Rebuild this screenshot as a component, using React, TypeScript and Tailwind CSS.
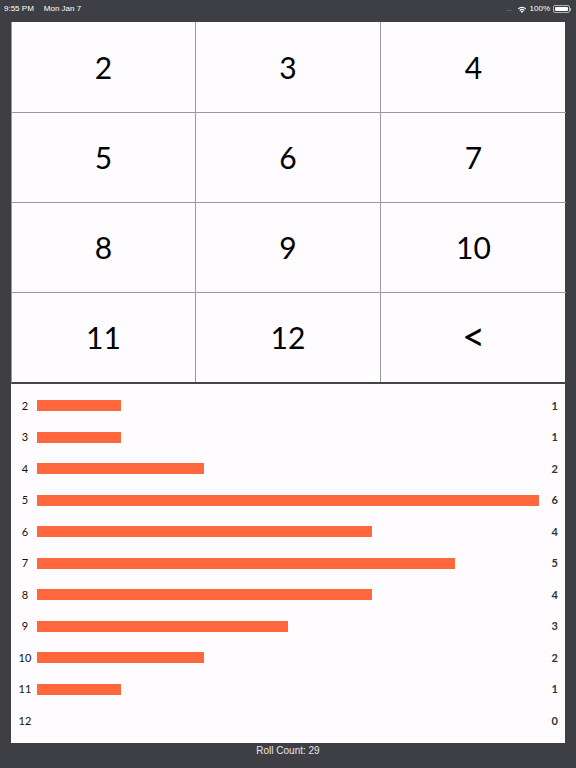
const keys = ["2", "3", "4", "5", "6", "7", "8", "9", "10", "11", "12", "<"]

const rolls: [string, number][] = [
  ["2", 1],
  ["3", 1],
  ["4", 2],
  ["5", 6],
  ["6", 4],
  ["7", 5],
  ["8", 4],
  ["9", 3],
  ["10", 2],
  ["11", 1],
  ["12", 0],
]

const max = Math.max(...rolls.map(([, n]) => n))
const total = rolls.reduce((s, [, n]) => s + n, 0)

function StatusBar() {
  return (
    <div className="h-[22px] flex items-start justify-between px-[4px] pt-[3px] text-[8px] text-white font-['Liberation_Sans',sans-serif]">
      <div className="flex gap-[10px]">
        <span>9:55 PM</span>
        <span>Mon Jan 7</span>
      </div>
      <div className="flex items-center gap-[3px] pr-[1px]">
        <span className="text-[#777] tracking-[-1px] mr-[2px]">.....</span>
        <svg width="10" height="8" viewBox="0 0 10 8" fill="white">
          <path d="M5 8 L3.6 6.4 A2 2 0 0 1 6.4 6.4 Z" />
          <path d="M2.3 5 A3.8 3.8 0 0 1 7.7 5 L6.9 5.9 A2.6 2.6 0 0 0 3.1 5.9 Z" />
          <path d="M0.8 3.4 A6 6 0 0 1 9.2 3.4 L8.4 4.3 A4.8 4.8 0 0 0 1.6 4.3 Z" />
        </svg>
        <span>100%</span>
        <div className="flex items-center">
          <div className="w-[17px] h-[8px] rounded-[2px] border border-white/60 p-[1px]">
            <div className="w-full h-full bg-white rounded-[1px]" />
          </div>
          <div className="w-[1px] h-[3px] bg-white/60" />
        </div>
      </div>
    </div>
  )
}

export default function App() {
  return (
    <div className="w-[576px] h-[768px] bg-[#3e3f44] flex flex-col font-['Lato',sans-serif]">
      <StatusBar />
      <div className="mx-[11px] bg-[#fffcff]">
        <div className="grid grid-cols-[184px_185px_185px] grid-rows-[90px_90px_90px_90px] border-l border-[#9a9a9a] border-b-2 border-b-[#444]">
          {keys.map((k, i) => (
            <div
              key={k}
              className={`flex items-center justify-center text-black border-[#9a9a9a] ${
                k === "<" ? "text-[40px] pb-[4px]" : "text-[30px]"
              } ${i % 3 !== 2 ? "border-r" : ""} ${i >= 3 ? "border-t" : ""}`}
            >
              {k}
            </div>
          ))}
        </div>
        <div className="h-[359px] pt-[6px] flex flex-col">
          {rolls.map(([label, n]) => (
            <div key={label} className="h-[31.5px] flex items-center text-[11px] text-[#111]">
              <div className="w-[26px] pl-[2px] text-center">{label}</div>
              <div className="w-[502px] h-[11px]">
                {n > 0 && (
                  <div className="h-full bg-[#ff683d]" style={{ width: `${(n / max) * 100}%` }} />
                )}
              </div>
              <div className="flex-1 text-right pr-[7px] font-bold text-[#333]">{n}</div>
            </div>
          ))}
        </div>
      </div>
      <div className="text-center text-[10px] text-[#e6e6e6] font-['Liberation_Sans',sans-serif]">
        Roll Count: {total}
      </div>
    </div>
  )
}
